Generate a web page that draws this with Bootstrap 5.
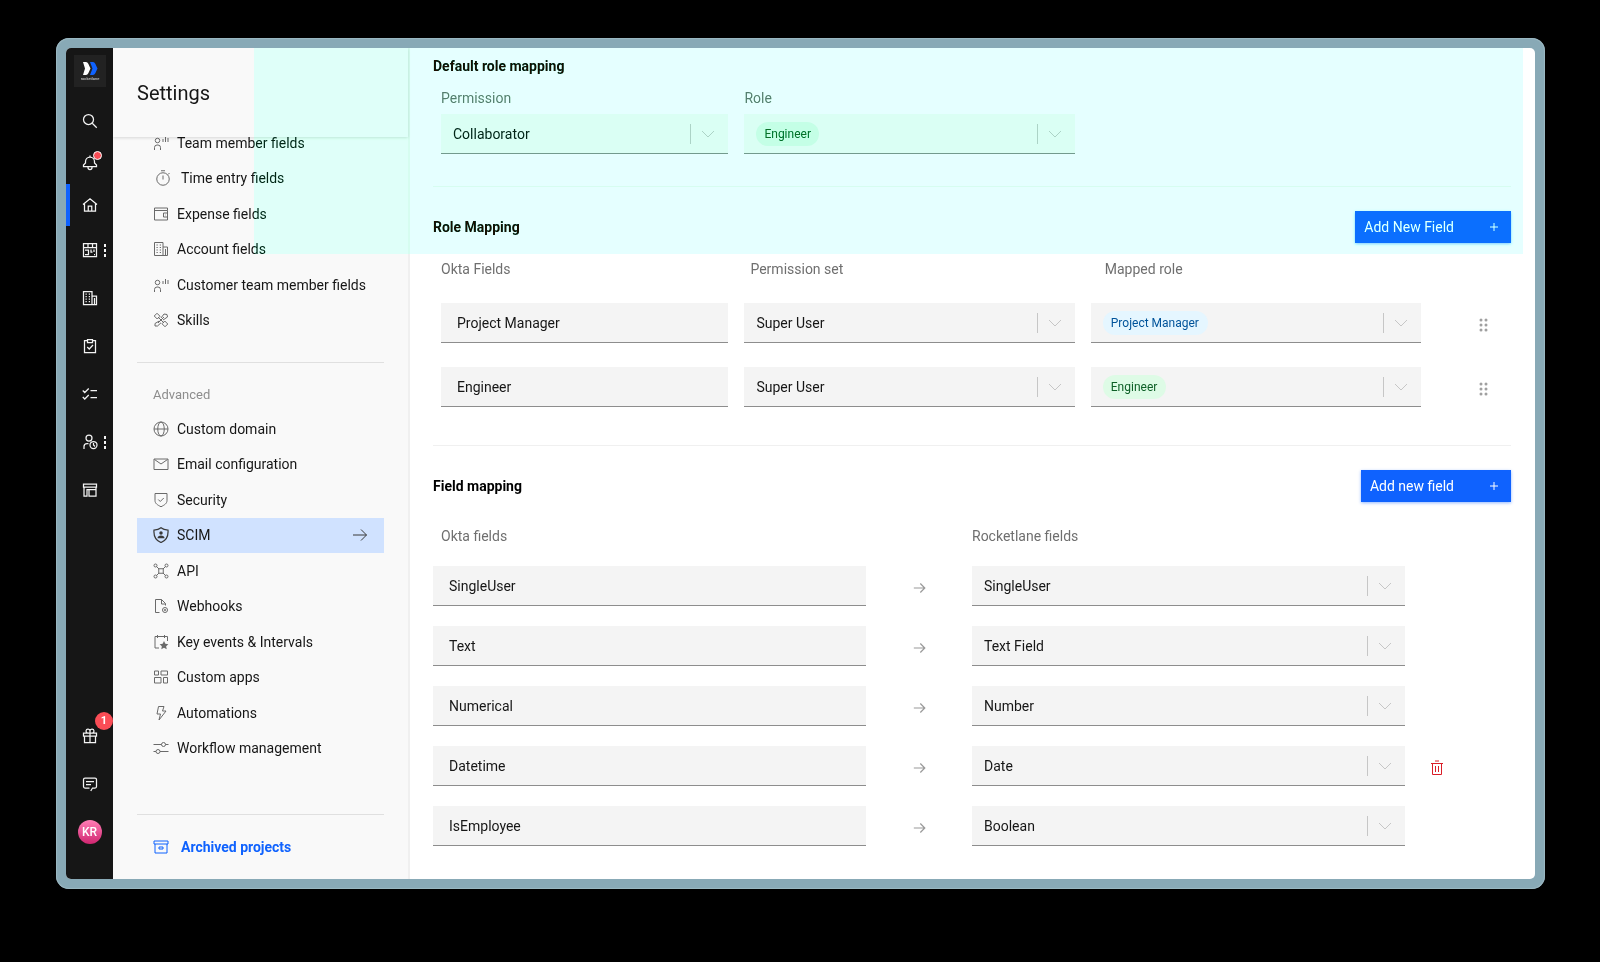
<!DOCTYPE html>
<html lang="en">
<head>
<meta charset="utf-8">
<meta name="viewport" content="width=device-width, initial-scale=1">
<title>Settings – SCIM</title>
<link href="https://cdn.jsdelivr.net/npm/bootstrap@5.3.0/dist/css/bootstrap.min.css" rel="stylesheet">
<style>
  body { background: #000; color: #161616; font: 14px/20px Roboto, "Liberation Sans", sans-serif; }
  .stage { padding: 38px 55px 73px 56px; }
  .bezel { background: #88a9b6; border-radius: 13px; padding: 10px; box-shadow: inset 0 0 1px 1px #9cb8c2; }
  .window { background: #fff; border-radius: 5px; overflow: hidden; position: relative; }
  svg.ico { width: 16px; height: 16px; flex: none; fill: none; stroke: currentColor; stroke-width: 2; display: block; }

  /* rail */
  .rail { width: 47px; flex: none; background: #161616; color: #f4f4f4; padding: 7px 0 23px; }
  .brand { width: 32px; height: 32px; background: #222; margin-bottom: 13px; }
  .rail button { width: 47px; height: 42px; border: 0; background: none; color: inherit; padding: 0; position: relative; display: flex; align-items: center; justify-content: center; }
  .rail .tall button { height: 48px; }
  .rail button.current { box-shadow: inset 4px 0 #0f62fe; }
  .rail svg.ico { stroke-width: 2.5; }
  .alert-dot { position: absolute; top: 9px; left: 27px; width: 9px; height: 9px; border-radius: 50%; background: #fa4d56; border: 1px solid #fff; }
  .more { position: absolute; right: 6px; top: 18px; width: 3px; height: 13px; fill: #f4f4f4; }
  .count { position: absolute; top: 0; right: 0; width: 18px; height: 18px; border-radius: 50%; background: #fa4d56; color: #fff; font-size: 11px; line-height: 18px; font-weight: 700; }
  .avatar { width: 24px; height: 24px; border-radius: 50%; background: linear-gradient(#ff7eb6, #d02670); font-size: 12px; line-height: 24px; font-weight: 500; color: #fff; }

  /* settings menu */
  .side { width: 297px; flex: none; background: #f9f9f9; border-right: 2px solid #f0f0f0; white-space: nowrap; }
  .side-head { height: 89px; background: #f9f9f9; padding: 0 24px; position: relative; z-index: 1; box-shadow: 0 1px 3px rgba(0,0,0,.14); margin-bottom: -12px; flex: none; }
  .side-head h1 { font-size: 20px; line-height: 28px; font-weight: 400; }
  .side ul { margin: 0 24px; }
  .side .six { flex: 6 1 0; }
  .side .ten { flex: 10 1 0; }
  .side li { flex: 1 1 0; }
  .side li a { height: 100%; padding: 0 16px; gap: 8px; color: #161616; text-decoration: none; display: flex; align-items: center; }
  .side li svg { color: #6a6a6a; }
  .side li svg.w20 { width: 20px; }
  .side li a.active { background: #d0e2ff; }
  .side li a.active svg { color: #393939; }
  .rule { border: 0; border-top: 1px solid #e0e0e0; opacity: 1; margin: 0; }
  .side .rule { margin: 24px 24px 0; }
  .side h2 { font-size: 13px; line-height: 16px; font-weight: 400; color: #8d8d8d; margin: 24px 40px 8px; }
  .archive { color: #0f62fe; font-weight: 700; text-decoration: none; gap: 12px; margin: 0 40px; height: 64px; }

  /* content */
  .content { padding: 8px 24px 33px 23px; }
  .content h2 { font-size: 14px; line-height: 20px; font-weight: 700; margin: 0; color: #000; }
  .content .rule { border-color: #f0f0f0; margin: 38px 0 24px; }
  .content .rule.near { margin-top: 32px; }
  .caption { color: #6f6f6f; }
  .caption.tight { margin: 12px 0 6px; }
  .caption .in-1 { padding-left: 6px; }
  .caption .in-2 { padding-left: 14px; }
  .roles { display: grid; grid-template-columns: 288fr 331fr 331fr 74fr; column-gap: 16px; padding-left: 8px; align-items: center; }
  .fields { display: grid; grid-template-columns: 433fr 106fr 433fr 106fr; align-items: center; row-gap: 20px; }
  .entry, .pick { height: 40px; background: #f4f4f4; border: 0; border-bottom: 1px solid #8d8d8d; border-radius: 0; width: 100%; color: #161616; }
  .entry { padding: 0 16px; }
  .pick { display: flex; align-items: center; padding: 0 12px; }
  .pick select { appearance: none; border: 0; background: none; color: #161616; padding: 0; }
  .pick select.pill { height: 24px; border-radius: 12px; padding: 0 8px; font-size: 12px; line-height: 24px; }
  .pick select.green { background: #defbe6; color: #0e6027; }
  .pick select.blue { background: #e5f6ff; color: #00539a; }
  .pick svg { width: 28px; height: 20px; flex: none; margin-left: auto; fill: none; stroke: #c6c6c6; pointer-events: none; }
  .add { display: flex; align-items: center; gap: 32px; height: 32px; border: 0; border-radius: 0; background: #0f62fe; color: #fff; padding: 0 9px; box-shadow: 0 1px 3px rgba(15,98,254,.45); }
  .grip { border: 0; background: none; padding: 4px 0 0; color: #a0a0a0; justify-self: end; margin-right: 19px; }
  .bin { border: 0; background: none; padding: 4px 0 0; color: #da1e28; margin-left: 24px; justify-self: start; }
  svg.arrow { width: 13px; justify-self: center; margin-top: 4px; color: #9a9a9a; stroke-width: 3; }

  /* highlighted region laid over the top of the window */
  .tint { position: absolute; top: 0; left: 188px; right: 12px; height: 206px; pointer-events: none; z-index: 3; }
  .tint-r { background: #1a0000; mix-blend-mode: difference; }
  .tint-g { background: #000d00; mix-blend-mode: plus-lighter; }
</style>
</head>
<body>
<svg class="d-none" aria-hidden="true">
  <symbol id="search" viewBox="0 0 32 32"><circle cx="13" cy="13" r="10"/><path d="M20.5 20.5 29.500 29.500"/></symbol>
  <symbol id="bell" viewBox="0 0 32 32"><path d="M3 23v-3l4-4V13a9 9 0 0 1 18 0v3l4 4v3zM12 24v1a4 4 0 0 0 8 0v-1M16 1v3"/></symbol>
  <symbol id="home" viewBox="0 0 32 32"><path d="M2 15 16 3.500 30 15M5 13v15h22V13M12.500 28v-10h7v10"/></symbol>
  <symbol id="calendar" viewBox="0 0 32 32"><path d="M3 3h26v26H3zM3 11h26M12 3v8M21 3v8M6 16h7v9H6M18 15v5h3M24 25h2M24 15v5"/></symbol>
  <symbol id="building" viewBox="0 0 32 32"><path d="M3 3h17v26H3zM20 12h9v17h-9M25 16v13M7 8h2.500M13.500 8H16M7 13h2.500M13.500 13H16M7 18h2.500M13.500 18H16M7 23h2.500M13.500 23H16"/></symbol>
  <symbol id="clip" viewBox="0 0 32 32"><path d="M11 5H5v24h22V5h-6M11 3h10v6H11zM10.500 18l4 4 7.500-8"/></symbol>
  <symbol id="checks" viewBox="0 0 32 32"><path d="M1.500 9l4 4 8-8M1.500 22l4 4 8-8M17 9h13M17 23h13"/></symbol>
  <symbol id="usertime" viewBox="0 0 32 32"><circle cx="14" cy="8" r="6"/><path d="M4 30v-5a6 6 0 0 1 6-6h3"/><circle cx="23" cy="22" r="7"/><path d="M23 18v4l3 3"/></symbol>
  <symbol id="layout" viewBox="0 0 32 32"><path d="M3 4h26v6H3zM14 15h14v13H14zM4 10v18h6v-13h18v-5"/></symbol>
  <symbol id="gift" viewBox="0 0 32 32"><path d="M3 10h26v6H3zM5 16v13h22V16M16 10v19M16 10h-5a4 4 0 1 1 5-4zM16 10h5a4 4 0 1 0-5-4z"/></symbol>
  <symbol id="chat" viewBox="0 0 32 32"><path d="M17.500 30 21 24h5a3 3 0 0 0 3-3V7a3 3 0 0 0-3-3H6a3 3 0 0 0-3 3v14a3 3 0 0 0 3 3h9M8 11h16M8 17h10"/></symbol>
  <symbol id="team" viewBox="0 0 32 32"><circle cx="9" cy="11" r="4.500"/><path d="M3 30v-5a5 5 0 0 1 5-5h2a5 5 0 0 1 5 5v5M20 8v6M25 4v10M30 6v8"/></symbol>
  <symbol id="timer" viewBox="0 0 32 32"><circle cx="16" cy="18" r="12.500"/><path d="M12 1.500h8M16 11v8M26 9l3-3"/></symbol>
  <symbol id="wallet" viewBox="0 0 32 32"><path d="M29 9V4H3v24h26V9H3M29 14h-8v8h8M24 18h1"/></symbol>
  <symbol id="tools" viewBox="0 0 32 32"><path d="M2.500 8 8 2.500l6 6-5.500 5.500zM18 23.500l5.500-5.500 6 6-5.500 5.500zM12.500 18 4 23v5h5l7-6.500M16 12l6-8 6 1 1 5-9 6M10 10l12 12M22 10 10 22"/></symbol>
  <symbol id="globe" viewBox="0 0 32 32"><circle cx="16" cy="16" r="14"/><ellipse cx="16" cy="16" rx="6.500" ry="14"/><path d="M2 16h28"/></symbol>
  <symbol id="mail" viewBox="0 0 32 32"><path d="M2 6h28v21H2zM3 7l13 9 13-9"/></symbol>
  <symbol id="shield" viewBox="0 0 32 32"><path d="M4 3h24v14c0 6-5 9-12 12.500C9 26 4 23 4 17zM10.500 15l4 4 7-7"/></symbol>
  <symbol id="scim" viewBox="0 0 32 32"><path d="M16 1.500C12 5 7 6 2 6c-1 12 4 21 14 25C26 27 31 18 30 6c-5 0-10-1-14-4.500z" stroke-width="2.500"/><circle cx="16" cy="12" r="3.500" fill="currentColor" stroke="none"/><path fill="currentColor" stroke="none" d="M9 22.500c0-4 3-5.500 7-5.500s7 1.500 7 5.500z"/></symbol>
  <symbol id="api" viewBox="0 0 32 32"><circle cx="5" cy="5" r="3"/><circle cx="27" cy="5" r="3"/><circle cx="5" cy="27" r="3"/><circle cx="27" cy="27" r="3"/><path d="M11.500 11.500h9v9h-9zM7 7l5 5M25 7l-5 5M7 25l5-5M25 25l-5-5"/></symbol>
  <symbol id="hook" viewBox="0 0 32 32"><path d="M13 29H5V3h12l8 8v4M17 3v9h8"/><circle cx="24" cy="24" r="5"/><circle cx="24" cy="24" r="2" fill="currentColor" stroke="none"/></symbol>
  <symbol id="event" viewBox="0 0 32 32"><path d="M12 28H4V5h25v9M9 2v6M23 2v6"/><path fill="currentColor" stroke="none" d="M22 14l2.700 5.500 6 .8-4.400 4.200 1.100 6-5.400-2.900-5.400 2.900 1.100-6-4.400-4.200 6-.8z"/></symbol>
  <symbol id="apps" viewBox="0 0 32 32"><path d="M3 4h8v8H3zM16 4h13v8H16zM3 17h13v11H3zM21 17h8v11h-8z"/></symbol>
  <symbol id="bolt" viewBox="0 0 32 32"><path d="M11 3h11l-3 9h7L12 30l3-12H8z"/></symbol>
  <symbol id="sliders" viewBox="0 0 32 32"><path d="M1 9h16M25 9h6M1 23h5M14 23h17"/><circle cx="21" cy="9" r="4"/><circle cx="10" cy="23" r="4"/></symbol>
  <symbol id="box" viewBox="0 0 32 32"><path d="M2 4h28v6H2zM4 10v18h24V10M12 16h8v4h-8z"/></symbol>
  <symbol id="right" viewBox="0 0 32 32"><path d="M2 16h27M18 5l11 11-11 11"/></symbol>
  <symbol id="plus" viewBox="0 0 32 32"><path d="M16 8v16M8 16h16"/></symbol>
  <symbol id="trash" viewBox="0 0 32 32"><path d="M4 7h24M7 7v22h18V7M12 2h8M13 12v12M19 12v12"/></symbol>
  <symbol id="grip" viewBox="0 0 16 16"><g fill="currentColor" stroke="none"><circle cx="5" cy="3" r="1.500"/><circle cx="10" cy="3" r="1.500"/><circle cx="5" cy="8" r="1.500"/><circle cx="10" cy="8" r="1.500"/><circle cx="5" cy="13" r="1.500"/><circle cx="10" cy="13" r="1.500"/></g></symbol>
  <symbol id="down" viewBox="0 0 28 20"><path d="M2.500 0v20M14 7l6 6 6-6"/></symbol>
</svg>

<div class="stage">
<div class="bezel">
<div class="window d-flex">

  <nav class="rail d-flex flex-column align-items-center" aria-label="Main">
    <div class="brand">
      <svg width="32" height="32" viewBox="0 0 32 32" role="img" aria-label="rocketlane"><path fill="#fff" d="M9 7h3q1.500 0 2.300 1.700L16.500 13.500l-2.200 4.800Q13.500 20 12 20H9l2-6.500z"/><path fill="#0f62fe" d="M16 7h3q1.500 0 2.300 1.700L23.500 13.500l-2.200 4.800Q20.500 20 19 20h-3l2.500-6.500z"/><text x="16" y="25" fill="#ddd" font-size="4" text-anchor="middle">rocketlane</text></svg>
    </div>
    <button aria-label="Search"><svg class="ico"><use href="#search"/></svg></button>
    <button aria-label="Notifications"><svg class="ico"><use href="#bell"/></svg><span class="alert-dot"></span></button>
    <button class="current" aria-label="Home"><svg class="ico"><use href="#home"/></svg></button>
    <div class="tall">
      <button aria-label="Timesheets"><svg class="ico"><use href="#calendar"/></svg><svg class="more" viewBox="0 0 3 13"><path d="M0 0h2v3H0zM0 5h2v3H0zM0 10h2v3H0z"/></svg></button>
      <button aria-label="Accounts"><svg class="ico"><use href="#building"/></svg></button>
      <button aria-label="Projects"><svg class="ico"><use href="#clip"/></svg></button>
      <button aria-label="Tasks"><svg class="ico"><use href="#checks"/></svg></button>
      <button aria-label="Resources"><svg class="ico"><use href="#usertime"/></svg><svg class="more" viewBox="0 0 3 13"><path d="M0 0h2v3H0zM0 5h2v3H0zM0 10h2v3H0z"/></svg></button>
      <button aria-label="Templates"><svg class="ico"><use href="#layout"/></svg></button>
    </div>
    <div class="tall mt-auto">
      <button aria-label="What's new"><svg class="ico"><use href="#gift"/></svg><span class="count">1</span></button>
      <button aria-label="Feedback"><svg class="ico"><use href="#chat"/></svg></button>
      <button aria-label="Profile"><span class="avatar">KR</span></button>
    </div>
  </nav>

  <aside class="side d-flex flex-column">
    <header class="side-head d-flex align-items-center"><h1 class="m-0">Settings</h1></header>
    <ul class="six list-unstyled d-flex flex-column">
      <li><a href="#"><svg class="ico"><use href="#team"/></svg>Team member fields</a></li>
      <li><a href="#"><svg class="ico w20"><use href="#timer"/></svg>Time entry fields</a></li>
      <li><a href="#"><svg class="ico"><use href="#wallet"/></svg>Expense fields</a></li>
      <li><a href="#"><svg class="ico"><use href="#building"/></svg>Account fields</a></li>
      <li><a href="#"><svg class="ico"><use href="#team"/></svg>Customer team member fields</a></li>
      <li><a href="#"><svg class="ico"><use href="#tools"/></svg>Skills</a></li>
    </ul>
    <hr class="rule">
    <h2>Advanced</h2>
    <ul class="ten list-unstyled d-flex flex-column">
      <li><a href="#"><svg class="ico"><use href="#globe"/></svg>Custom domain</a></li>
      <li><a href="#"><svg class="ico"><use href="#mail"/></svg>Email configuration</a></li>
      <li><a href="#"><svg class="ico"><use href="#shield"/></svg>Security</a></li>
      <li><a href="#" class="active" aria-current="page"><svg class="ico"><use href="#scim"/></svg>SCIM<svg class="ico ms-auto"><use href="#right"/></svg></a></li>
      <li><a href="#"><svg class="ico"><use href="#api"/></svg>API</a></li>
      <li><a href="#"><svg class="ico"><use href="#hook"/></svg>Webhooks</a></li>
      <li><a href="#"><svg class="ico"><use href="#event"/></svg>Key events &amp; Intervals</a></li>
      <li><a href="#"><svg class="ico"><use href="#apps"/></svg>Custom apps</a></li>
      <li><a href="#"><svg class="ico"><use href="#bolt"/></svg>Automations</a></li>
      <li><a href="#"><svg class="ico"><use href="#sliders"/></svg>Workflow management</a></li>
    </ul>
    <hr class="rule mt-5">
    <a href="#" class="archive d-flex align-items-center"><svg class="ico"><use href="#box"/></svg>Archived projects</a>
  </aside>

  <main class="content flex-grow-1">
    <section>
      <h2>Default role mapping</h2>
      <div class="roles caption tight">
        <label for="perm">Permission</label><label for="role">Role</label>
      </div>
      <div class="roles">
        <div class="pick"><select id="perm" class="flex-grow-1"><option>Collaborator</option></select><svg><use href="#down"/></svg></div>
        <div class="pick"><select id="role" class="pill green"><option>Engineer</option></select><svg><use href="#down"/></svg></div>
      </div>
    </section>
    <hr class="rule near">
    <section>
      <div class="d-flex justify-content-between align-items-center">
        <h2>Role Mapping</h2>
        <button class="add">Add New Field<svg class="ico"><use href="#plus"/></svg></button>
      </div>
      <div class="roles caption mt-3 mb-4">
        <span>Okta Fields</span><span class="in-1">Permission set</span><span class="in-2">Mapped role</span>
      </div>
      <div class="roles mb-4">
        <input class="entry" aria-label="Okta field 1" value="Project Manager">
        <div class="pick"><select class="flex-grow-1" aria-label="Permission set 1"><option>Super User</option></select><svg><use href="#down"/></svg></div>
        <div class="pick"><select class="pill blue" aria-label="Mapped role 1"><option>Project Manager</option></select><svg><use href="#down"/></svg></div>
        <button class="grip" aria-label="Reorder"><svg class="ico"><use href="#grip"/></svg></button>
      </div>
      <div class="roles">
        <input class="entry" aria-label="Okta field 2" value="Engineer">
        <div class="pick"><select class="flex-grow-1" aria-label="Permission set 2"><option>Super User</option></select><svg><use href="#down"/></svg></div>
        <div class="pick"><select class="pill green" aria-label="Mapped role 2"><option>Engineer</option></select><svg><use href="#down"/></svg></div>
        <button class="grip" aria-label="Reorder"><svg class="ico"><use href="#grip"/></svg></button>
      </div>
    </section>
    <hr class="rule">
    <section>
      <div class="d-flex justify-content-between align-items-center">
        <h2>Field mapping</h2>
        <button class="add">Add new field<svg class="ico"><use href="#plus"/></svg></button>
      </div>
      <div class="fields caption mt-4 mb-3 pb-1">
        <span class="ps-2">Okta fields</span><span></span><span>Rocketlane fields</span>
      </div>
      <div class="fields">
        <input class="entry" aria-label="Okta field" value="SingleUser"><svg class="ico arrow"><use href="#right"/></svg>
        <div class="pick"><select class="flex-grow-1" aria-label="Rocketlane field"><option>SingleUser</option></select><svg><use href="#down"/></svg></div><span></span>
        <input class="entry" aria-label="Okta field" value="Text"><svg class="ico arrow"><use href="#right"/></svg>
        <div class="pick"><select class="flex-grow-1" aria-label="Rocketlane field"><option>Text Field</option></select><svg><use href="#down"/></svg></div><span></span>
        <input class="entry" aria-label="Okta field" value="Numerical"><svg class="ico arrow"><use href="#right"/></svg>
        <div class="pick"><select class="flex-grow-1" aria-label="Rocketlane field"><option>Number</option></select><svg><use href="#down"/></svg></div><span></span>
        <input class="entry" aria-label="Okta field" value="Datetime"><svg class="ico arrow"><use href="#right"/></svg>
        <div class="pick"><select class="flex-grow-1" aria-label="Rocketlane field"><option>Date</option></select><svg><use href="#down"/></svg></div>
        <button class="bin" aria-label="Delete field"><svg class="ico"><use href="#trash"/></svg></button>
        <input class="entry" aria-label="Okta field" value="IsEmployee"><svg class="ico arrow"><use href="#right"/></svg>
        <div class="pick"><select class="flex-grow-1" aria-label="Rocketlane field"><option>Boolean</option></select><svg><use href="#down"/></svg></div><span></span>
      </div>
    </section>
  </main>

  <div class="tint tint-r"></div>
  <div class="tint tint-g"></div>
</div>
</div>
</div>
<script src="https://cdn.jsdelivr.net/npm/bootstrap@5.3.0/dist/js/bootstrap.bundle.min.js"></script>
</body>
</html>
